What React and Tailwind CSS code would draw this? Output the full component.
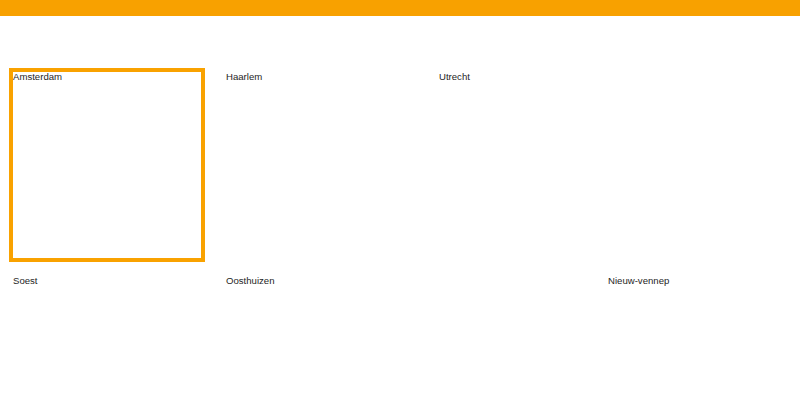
import React from "react";

const cities = [
  { name: "Amsterdam", active: true },
  { name: "Haarlem" },
  { name: "Utrecht" },
];

const secondRow = [{ name: "Soest" }, { name: "Oosthuizen" }];

const Tile = ({ name, active }) => (
  <div
    className={`w-[196px] h-[194px] border-4 ${
      active ? "border-[#f9a200]" : "border-transparent"
    }`}
  >
    <span className="block text-[9.6px] leading-[9px] text-[#1e1e1e]">{name}</span>
  </div>
);

export default function App() {
  return (
    <div
      className="w-[800px] h-[403px] bg-white overflow-hidden"
      style={{ fontFamily: '"Liberation Sans", Arial, sans-serif' }}
    >
      <div className="h-4 bg-[#f8a100]" />
      <div className="pt-[52px] pl-[9px]">
        <div className="flex gap-[17px]">
          {cities.map((c) => (
            <Tile key={c.name} {...c} />
          ))}
        </div>
        <div className="flex gap-[17px] mt-[10px]">
          {secondRow.map((c) => (
            <Tile key={c.name} {...c} />
          ))}
          <div className="ml-auto">
            <Tile name="Nieuw-vennep" />
          </div>
        </div>
      </div>
    </div>
  );
}
